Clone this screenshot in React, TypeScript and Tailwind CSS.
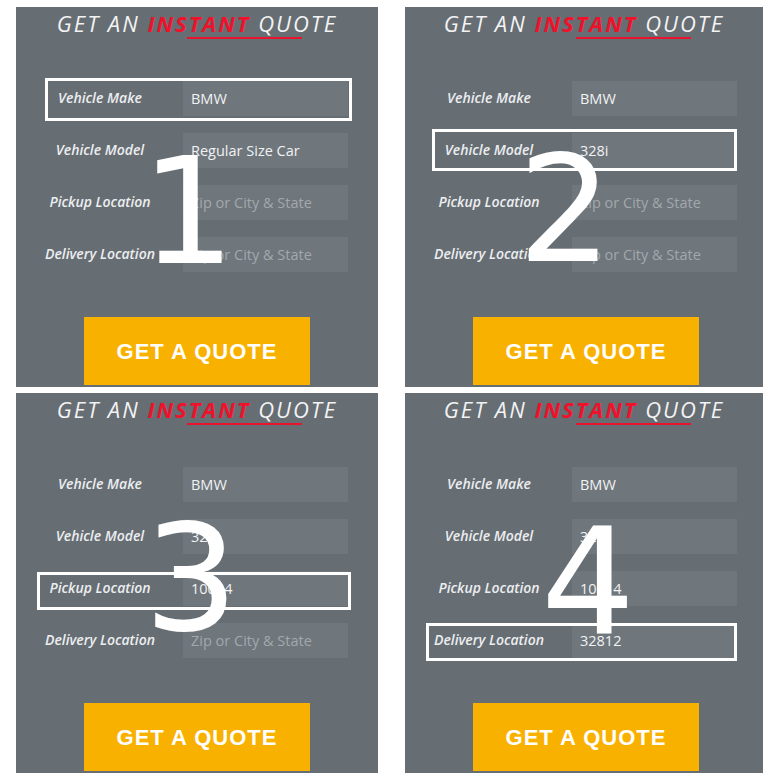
import React from 'react'

type Panel = {
  model: string
  pickup: string
  delivery: string
  step: string
  stepPos: string
  box: string
}

const PANELS: Panel[] = [
  {
    model: 'Regular Size Car',
    pickup: '',
    delivery: '',
    step: '1',
    stepPos: 'left-[125px] top-[131px]',
    box: 'left-[29px] top-[71px] w-[307px] h-[43px]',
  },
  {
    model: '328i',
    pickup: '',
    delivery: '',
    step: '2',
    stepPos: 'left-[113px] top-[129px]',
    box: 'left-[27px] top-[122px] w-[305px] h-[42px]',
  },
  {
    model: '328i',
    pickup: '10014',
    delivery: '',
    step: '3',
    stepPos: 'left-[128px] top-[112px]',
    box: 'left-[21px] top-[179px] w-[314px] h-[38px]',
  },
  {
    model: '328i',
    pickup: '10014',
    delivery: '32812',
    step: '4',
    stepPos: 'left-[136px] top-[115px]',
    box: 'left-[21px] top-[230px] w-[311px] h-[38px]',
  },
]

function Field({ label, value, placeholder }: { label: string; value: string; placeholder?: string }) {
  return (
    <div className="flex items-center h-[35px]">
      <label className="ml-[16px] w-[136px] text-center text-[14px] italic font-semibold text-[#eceef0] font-['Open_Sans',sans-serif] -mt-[3px]">
        {label}
      </label>
      <input
        readOnly
        value={value}
        placeholder={placeholder}
        className="ml-[15px] w-[165px] h-[35px] bg-[#6f767c] pl-[8px] text-[14.5px] text-[#f1f2f3] placeholder:text-[#a3a8ad] font-['Open_Sans',sans-serif] outline-none"
      />
    </div>
  )
}

function QuotePanel({ p }: { p: Panel }) {
  return (
    <div className="relative h-[380px] bg-[#666d73] flex flex-col overflow-hidden">
      {/* Title */}
      <div className="relative pt-[2px] h-[31px] text-center text-[22px] leading-[28px] italic tracking-[2px] text-[#f3f3f3] font-['Open_Sans',sans-serif]">
        GET AN <span className="font-bold text-[#f0112b]">INSTANT</span> QUOTE
        <div className="absolute left-[171px] top-[30px] w-[115px] h-[2px] bg-[#e8132c]" />
      </div>

      <div className="mt-[43px] flex flex-col gap-[17px]">
        <Field label="Vehicle Make" value="BMW" />
        <Field label="Vehicle Model" value={p.model} />
        <Field label="Pickup Location" value={p.pickup} placeholder="Zip or City & State" />
        <Field label="Delivery Location" value={p.delivery} placeholder="Zip or City & State" />
      </div>

      <button className="mt-[45px] ml-[68px] w-[226px] h-[68px] bg-[#f9b100] text-white text-[22px] tracking-[1px] font-bold font-['Liberation_Sans',Arial,sans-serif]">
        GET A QUOTE
      </button>

      {/* step highlight */}
      <div className={`absolute border-[3px] border-white ${p.box}`} />

      {/* step number */}
      <span
        className={`absolute leading-none text-[148px] text-white font-['DejaVu_Sans',sans-serif] ${p.stepPos}`}
      >
        {p.step}
      </span>
    </div>
  )
}

export default function App() {
  return (
    <div className="w-[780px] h-[780px] bg-white pl-[16px] pt-[7px]">
      <div className="grid grid-cols-[362px_358px] grid-rows-[380px_380px] gap-x-[27px] gap-y-[6px]">
        {PANELS.map((p) => (
          <QuotePanel key={p.step} p={p} />
        ))}
      </div>
    </div>
  )
}
